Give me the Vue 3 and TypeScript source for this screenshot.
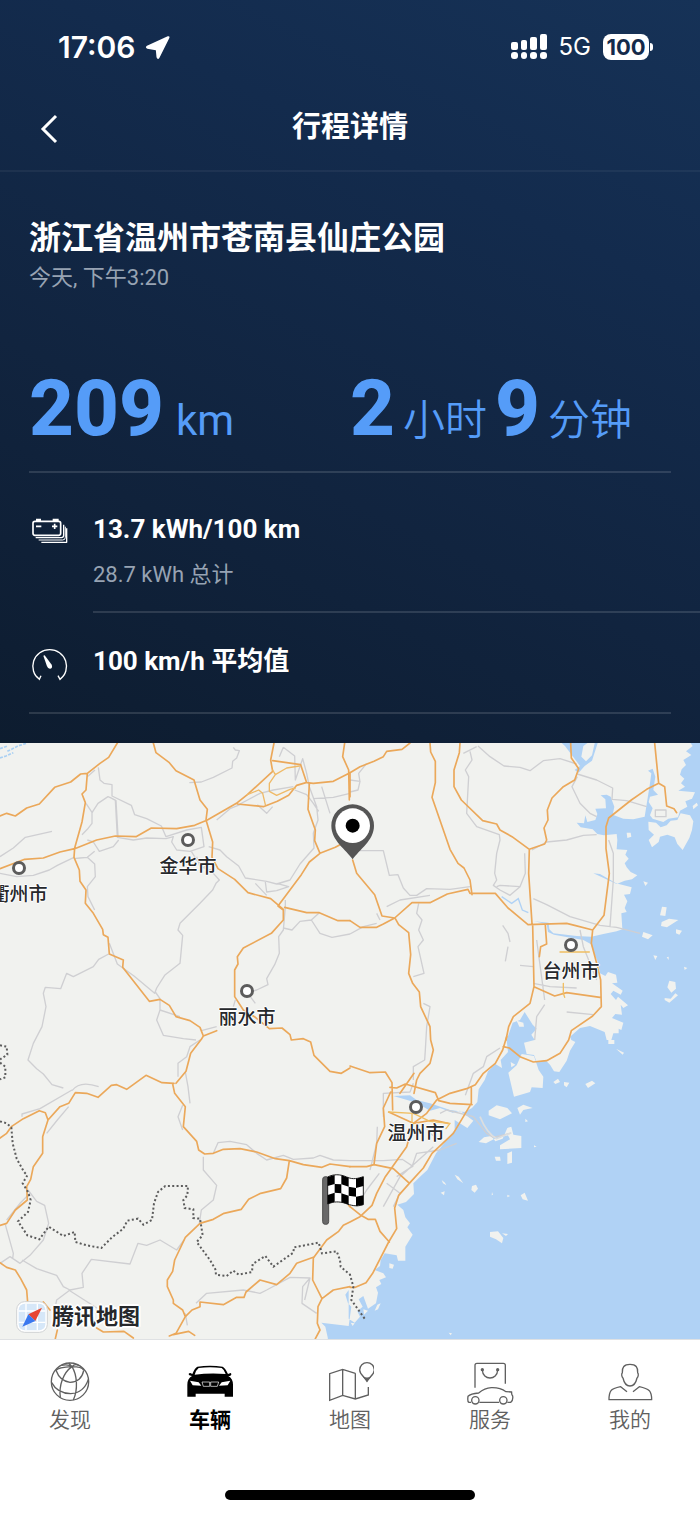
<script setup lang="ts">
interface City {
  name: string
  x: number
  y: number
}

interface Tab {
  id: string
  label: string
  active?: boolean
}

const MAP_WIDTH = 700
const MAP_HEIGHT = 596

const cities: City[] = [
  { name: '金华市', x: 188, y: 97 },
  { name: '衢州市', x: 19, y: 125 },
  { name: '丽水市', x: 247, y: 248 },
  { name: '台州市', x: 571, y: 202 },
  { name: '温州市', x: 416, y: 364 },
]

const tabs: Tab[] = [
  { id: 'discover', label: '发现' },
  { id: 'vehicle', label: '车辆', active: true },
  { id: 'map', label: '地图' },
  { id: 'service', label: '服务' },
  { id: 'profile', label: '我的' },
]

const place = (c: City) => ({
  left: (c.x / MAP_WIDTH) * 100 + '%',
  top: (c.y / MAP_HEIGHT) * 100 + '%',
})
</script>

<template>
  <div class="screen">
    <section class="trip">
      <div class="status">
        <div class="status-side">
          <span class="time">17:06</span>
          <svg class="arrow" viewBox="370 42 76 76" aria-hidden="true">
            <path d="M439 46 Q446 44 444 51 L414 111 Q409 119 405 110 L403 88 L377 84 Q369 80 376 75Z" fill="#fff" />
          </svg>
        </div>
        <div class="status-side">
          <svg class="signal" viewBox="0 0 36 26" aria-hidden="true">
            <g fill="#fff">
              <rect x="0" y="8" width="7" height="8" rx="2" />
              <rect x="10" y="6" width="6" height="10" rx="2" />
              <rect x="19" y="3" width="7" height="13" rx="2" />
              <rect x="29" y="0" width="7" height="16" rx="2" />
              <rect x="0" y="18" width="7" height="7" rx="3" />
              <rect x="10" y="18" width="6" height="7" rx="3" />
              <rect x="19" y="18" width="7" height="7" rx="3" />
              <rect x="29" y="18" width="7" height="7" rx="3" />
            </g>
          </svg>
          <span class="network">5G</span>
          <span class="battery">100</span>
        </div>
      </div>

      <header class="header">
        <button class="back" type="button" aria-label="返回">
          <svg viewBox="0 0 18 30" aria-hidden="true">
            <path d="M16 2 L3 15 L16 28" fill="none" stroke="#fff" stroke-width="3" />
          </svg>
        </button>
        <h1>行程详情</h1>
      </header>

      <div class="place">
        <h2>浙江省温州市苍南县仙庄公园</h2>
        <p>今天, 下午3:20</p>
      </div>

      <div class="figures">
        <p><strong>209</strong><span class="unit">km</span></p>
        <p><strong>2</strong><span class="unit cjk">小时</span><strong class="minutes">9</strong><span class="unit cjk">分钟</span></p>
      </div>

      <div class="row">
        <svg class="row-icon" viewBox="32 46 120 102" aria-hidden="true">
          <g fill="none" stroke="#fff" stroke-width="5" stroke-linejoin="round">
            <rect x="41" y="62" width="83" height="42" rx="6" />
            <path d="M49 111 H126 Q133 111 133 104 V72" stroke-width="4" />
            <path d="M58 118 H130 Q138 118 138 110 V78" stroke-width="3" />
            <path d="M66 125 H142 V83" stroke-width="4" />
            <path d="M50 77 H66 M98 77 H114 M106 69 V85" stroke-width="5" />
          </g>
          <path d="M50 61 V54 H65 V61Z M100 61 V54 H118 V61Z" fill="#fff" />
        </svg>
        <div class="row-text">
          <p class="main">13.7 kWh/100 km</p>
          <p class="sub">28.7 kWh 总计</p>
        </div>
      </div>

      <div class="row last">
        <svg class="row-icon" viewBox="32 441 120 102" aria-hidden="true">
          <path d="M53 527 L60 535 L65 524 M60 534 C42 523 37 499 43 480 C50 459 69 446 91 446 C113 446 132 459 139 480 C145 499 140 523 122 534 M116 524 L122 535 L130 527" fill="none" stroke="#fff" stroke-width="4" />
          <path d="M72 464 L76 463 L97 491 Q101 500 93 503 Q86 504 83 496Z" fill="#fff" />
        </svg>
        <div class="row-text">
          <p class="main">100 km/h 平均值</p>
        </div>
      </div>
    </section>

    <section class="map" aria-label="行程地图">
      <svg class="map-art" viewBox="0 9 2100 1788" aria-hidden="true">
        <rect x="0" y="0" width="2100" height="1800" fill="#f1f2ef" />

        <g transform="translate(1050 0)">
          <!-- sea -->
          <path fill="#b0d2f5" d="M1015 0 L1028 18 1008 34 1024 45 1000 60 1008 75 995 88 990 104 1003 116 993 130 1005 140 985 152 1035 157 1026 176 1006 184 1012 200 990 212 984 232 955 236 940 246 908 236 900 226 908 205 896 186 900 170 924 164 910 150 916 110 908 86 894 92 904 100 900 130 892 180 884 230 850 238 820 236 788 224 793 200 782 170 770 164 752 166 766 178 768 205 736 206 742 222 736 240 712 246 706 226 702 250 680 248 692 262 728 268 742 282 762 286 800 282 802 300 800 328 832 330 826 344 836 356 824 370 830 382 842 396 862 406 846 418 824 422 800 432 730 400 750 402 798 430 845 442 840 462 822 464 832 484 824 504 830 516 814 520 817 568 800 574 760 582 724 590 680 588 610 580 598 568 596 548 552 544 590 552 594 576 612 584 700 600 722 612 732 640 742 662 750 700 766 708 774 696 798 704 802 728 786 730 818 752 812 764 790 752 782 762 798 780 804 770 834 796 820 804 812 794 816 824 796 822 786 834 820 848 814 870 806 866 806 880 790 880 784 900 770 900 764 876 720 858 690 864 660 890 664 900 676 906 660 932 650 962 628 996 612 994 600 974 586 960 560 966 552 945 530 942 522 908 554 900 544 884 560 866 548 854 524 816 510 840 488 848 470 900 474 936 452 960 456 984 436 972 414 994 404 1020 386 1048 382 1086 366 1104 344 1116 300 1110 240 1090 200 1080 180 1066 130 1068 200 1088 240 1112 270 1104 308 1118 330 1112 370 1142 352 1164 314 1140 314 1170 290 1200 258 1240 232 1290 210 1310 190 1330 192 1362 168 1386 142 1394 160 1410 166 1432 180 1450 172 1462 188 1484 166 1520 166 1562 144 1562 140 1546 104 1540 92 1560 90 1578 74 1590 100 1600 108 1612 88 1620 94 1632 78 1642 84 1658 78 1690 54 1706 40 1668 26 1678 38 1700 22 1714 30 1730 14 1748 -4 1736 -4 1650 -14 1664 -6 1690 4 1700 -4 1758 -86 1748 -74 1760 -66 1796 -76 1800 1060 1800 1060 0Z" />
          <path fill="#b0d2f5" d="M625 0 L645 18 690 78 674 90 686 98 704 78 726 62 746 0 734 10 726 46 708 64 694 50 700 18 714 8Z" />
          <path fill="#f1f2ef" d="M895 245 L918 248 932 262 950 256 962 242 982 240 992 220 1020 226 1030 244 1026 270 1018 294 998 330 982 312 974 292 952 284 930 290 926 306 906 322 896 300 912 284 896 270Z M1028 198 l12 -10 4 8 -14 12Z M830 278 l12 0 2 12 -12 4Z M936 500 l14 2 -4 26 -16 -2Z M935 546 l22 -10 28 4 -34 22 -18 -4Z M880 576 l28 10 -14 12 -18 -8Z M978 568 l18 4 -8 12 -10 -4Z M958 722 l18 4 2 20 -14 12 -12 -16Z M944 774 l18 2 14 -16 8 6 -26 22 -14 -8Z M910 646 l12 2 -6 12Z M950 652 l6 -2 0 10Z M1002 680 l10 4 -8 6Z M880 424 l14 4 -8 10Z M500 842 L520 848 522 860 508 860Z" />
          <path fill="#f1f2ef" d="M475 998 L500 976 515 942 552 948 566 990 580 1010 578 1044 545 1042 540 1056 492 1070Z M482 966 l14 8 -12 8Z M416 1112 L440 1096 472 1104 486 1120 450 1138 416 1126Z M502 1104 l18 -10 28 10 -28 6 -10 14Z M402 1192 l22 -4 12 16 22 -8 14 -32 12 -4 6 24 24 4 0 36 -64 4 0 -12 30 -18 -6 -12 -40 10 -26 14 -22 -4Z M610 1026 l14 -10 6 10 -14 6Z M642 1026 l16 2 -8 14 -8 -6Z M706 1032 l20 -10 10 8 -22 14Z M434 1250 l16 0 2 12 -14 0Z M472 1240 l14 -6 0 34 -14 4Z M366 1338 l12 -4 6 12 -10 12 -10 -8Z M512 1366 l12 -8 10 24 -16 -4Z M314 1304 l12 6 14 20 -18 -12Z M272 1358 l12 -4 -2 12Z M275 1320 l10 8 4 8 -10 -6Z M472 1364 l8 4 -8 4Z M420 1476 L444 1474 460 1494 456 1510 438 1498 420 1490Z M456 1480 l18 2 -6 6Z M775 900 l18 0 0 12 -18 0Z M798 926 l24 12 -4 6Z M118 1570 l14 4 -4 12 -10 -2Z M74 1712 l8 -18 10 -4 -8 18Z M2 1748 l12 2 -6 8Z M296 1778 l10 2 -4 6Z M40 1708 l14 4 -12 12Z M526 1136 l8 8 -8 2Z M552 1216 l8 4 -8 2Z M426 1356 l3 8 -4 2Z" />
          <path d="M455 470 l30 20 20 -14 12 34 18 8" fill="none" stroke="#b0d2f5" stroke-width="4" />
        </g>
        <path d="M0 54 L18 48 40 38 M0 26 l22 -8 M22 34 l32 -16 24 -8" fill="none" stroke="#a9d0f3" stroke-width="5" stroke-dasharray="9 4" />

        <!-- secondary roads -->
        <g fill="none" stroke="#cfcfd2" stroke-width="4" stroke-linejoin="round">
          <path d="M295 82 L300 120 312 130 336 134 336 168 394 196 404 224 440 236 484 258 498 290 560 270 604 262 612 320 570 334 530 330 515 306 520 290 498 296 440 294 400 300 352 292 346 180 324 170 294 190 276 218 276 250 262 268 246 284 M258 190 L278 220 M330 172 L348 182 354 288 M262 300 L280 306 298 334 340 320 356 300 M285 90 L262 110 M156 274 L76 292 40 324 0 350 M222 352 L172 376 148 390 100 406 50 410 0 400 M262 352 L284 372 286 410 262 440 264 470 284 510 M262 352 L240 354 222 356 M284 334 L262 352 M700 22 L706 30 718 32 710 54 698 64 696 84 640 112 604 126 568 128 M850 22 L838 50 M850 22 L884 48 886 120 908 56 920 100 928 140 950 200 954 240 940 280 942 324 900 372 870 420 830 432 800 424 736 414 716 378 680 350 660 330 626 320 M884 150 L920 164 940 190 956 214 M720 192 L780 160 820 150 880 140 M720 194 L690 206 650 240 M940 176 L1000 172 1050 160 M965 140 L990 220 M772 194 L800 220 818 200 M766 430 L800 466 M830 452 L866 440 830 430 M796 426 L800 456 830 452 M574 334 L590 360 640 400 658 420 648 430 638 450 600 490 570 520 540 550 534 570 548 586 540 670 494 706 470 744 464 760 402 708 352 672 328 610 M326 642 L296 658 280 680 220 710 200 700 182 746 136 742 130 760 138 800 126 860 100 910 84 960 110 986 130 1002 156 1034 190 1044 M466 756 L480 776 480 810 470 840 490 886 550 896 588 900 M480 810 L540 830 M856 480 L856 500 850 570 836 590 838 640 824 674 800 716 804 734 770 750 742 758 766 790 M850 564 L876 570 900 544 934 540 960 580 996 592 1050 582 M934 540 L958 518 M604 872 L650 860 M706 780 L700 800 M590 350 L600 380 640 392" />
          <path d="M216 1052 Q240 1020 296 1040 M216 1050 L120 1106 66 1122 66 1130 M206 1100 L172 1140 140 1180 M534 1010 L534 970 560 950 570 920 600 900 M556 996 L564 1040 570 1090 M548 1096 L534 1130 548 1170 M640 1240 L654 1208 690 1204 740 1214 770 1240 800 1260 850 1246 880 1258 940 1254 960 1246 1000 1260 1050 1262 M610 1250 L610 1290 650 1336 640 1380 604 1410 598 1450 M84 1350 L110 1384 134 1396 146 1450 130 1500 90 1546 60 1570 30 1550 0 1570 M90 1360 L60 1390 20 1440 M16 1454 L40 1540 38 1556 M66 1560 L110 1586 170 1606 190 1640 210 1650 250 1642 246 1600 274 1558 390 1572 414 1510 440 1516 480 1500 530 1530 552 1500 M210 1650 L170 1680 166 1700 M206 1650 L300 1710 M588 1690 L620 1660 730 1650 780 1660 800 1650 870 1612 930 1614 908 1640 906 1690 950 1720 M930 1614 L914 1680 M556 1720 L562 1756" />
          <path d="M1050 120 L1080 124 1074 150 1050 156 M1100 70 L1076 100 1080 126 M1434 18 L1470 50 1512 78 1560 82 1590 92 1630 62 1680 56 1730 72 M1410 34 L1416 60 1396 90 1406 110 1400 220 1430 260 1498 284 1500 300 1490 340 1484 400 1490 420 1480 436 1500 450 1530 466 1560 440 1500 436 1490 440 M1574 340 L1576 400 1560 440 M1430 20 L1390 40 M1732 110 L1716 140 1740 190 1770 220 1790 230 M1732 102 L1790 120 1838 144 1836 178 1880 182 1940 200 M1596 330 L1640 306 1700 300 1750 286 1790 284 M1600 476 L1640 494 1710 530 1800 556 1850 562 1920 580 M1826 300 L1840 340 1840 420 1830 560 M1064 332 L1150 332 1168 406 1194 404 1210 444 1230 466 1250 466 1280 446 1350 448 1410 440 M1160 500 L1200 480 1290 466 M1256 490 L1250 520 1266 540 1256 570 1270 600 1254 620 1272 700 1240 710 M1508 556 L1524 580 1530 606 M1524 620 L1516 664 M1610 600 L1634 780 M1560 676 L1600 680 M1600 730 L1650 740 1730 744 M1700 816 L1780 824 M1634 794 L1610 830 1604 900 M1270 790 L1290 800 1280 860 1276 930 1274 960 1240 980 1240 1020 M1740 570 L1750 620 1790 720 M1050 582 L1090 560 1130 550 M1130 520 L1140 540" />
          <path d="M1050 1262 L1150 1262 1210 1258 M1150 1130 L1150 1060 1230 1056 1240 1030 M1500 924 L1460 950 1450 980 1420 1000 1396 1066 M1320 1120 L1340 1110 1420 1130 1460 1180 1480 1192 1530 1180 M1370 1210 L1320 1230 1250 1240 1236 1280 1190 1310 M1300 1220 L1200 1310 1150 1400 M1290 1180 L1320 1200 M1138 1300 L1100 1350 1070 1400 M1160 1330 L1200 1360 1180 1400 M1240 1280 L1210 1260 M1132 1160 L1130 1210 1110 1290" />
          <path d="M1966 210 h32 v20 h-32Z" />
        </g>
        <path d="M1440 1130 Q1460 1180 1490 1196 L1534 1178" fill="none" stroke="#dcdedf" stroke-width="5" />

        <!-- highways -->
        <g fill="none" stroke="#eba85a" stroke-width="5" stroke-linejoin="round" stroke-linecap="round">
          <path d="M352 9 L326 52 300 70 262 100 242 102 212 126 164 142 118 192 80 204 46 228 20 220 0 228 M262 100 L258 150 246 162 256 188 246 246 224 324 222 352 238 390 240 424 258 450 256 490 280 520 308 568 310 584 324 592 328 642 370 660 368 682 448 784 480 778 508 796 528 830 570 842 600 862 610 888 650 872 M610 888 L604 898 572 940 558 994 528 1030 M0 386 L74 358 130 354 180 336 224 326 290 300 346 288 408 290 454 264 530 266 584 256 622 240 712 188 M460 9 L468 38 508 68 528 92 582 120 600 180 622 208 618 240 638 306 636 352 654 386 704 418 744 458 812 476 850 508 M822 9 L812 60 818 94 742 164 712 188 M818 62 L902 74 920 128 940 130 1000 124 1050 98 M712 192 L790 200 832 184 866 166 890 136 918 128 M928 132 L924 208 946 270 944 302 960 340 M1034 9 L1028 50 1046 90 1048 180 M1046 300 L1006 322 960 340 928 366 904 404 834 498 M834 498 L850 510 850 540 814 580 730 624 712 650 714 672 704 690 704 770 730 810 766 832 808 866 846 864 870 884 874 900 910 896 932 906 942 946 966 970 990 994 1024 1000 1050 984 M854 502 L920 518 958 518 1014 542 1050 542" />
          <path stroke-width="4" stroke="#efba68" d="M818 90 L826 104 860 84 898 78 M826 104 L808 130 808 154 830 166 870 148 886 144 M742 164 L776 150 788 160 796 194" />
          <path d="M1050 98 L1080 80 1122 64 1150 50 1160 34 1206 28 1230 9 M1050 98 L1050 170 M1290 9 L1292 36 1306 64 1306 128 1296 172 1350 328 1374 370 1392 384 1410 420 1416 464 M1380 9 L1378 38 1362 90 1362 140 1384 180 1448 242 1490 252 1500 270 1536 290 1588 328 1634 312 1640 300 1632 264 1644 240 1642 210 1656 174 1690 140 1724 120 1736 86 1714 54 1712 9 M1588 328 L1586 400 1596 550 M1964 9 L1976 130 1994 140 2000 198 2022 206 2030 218 M1976 130 L1940 148 1894 180 1826 234 1818 260 1818 326 1828 400 1812 526 1778 570 1724 556 1700 550 1584 554 1524 504 1486 460 1410 460 1404 448 1342 462 1290 488 1236 488 1184 534 1146 528 1124 464 1070 400 1058 360 M1184 534 L1150 552 1130 562 1080 562 1050 542 M1186 536 L1196 554 1226 578 1232 644 1226 700 1238 730 1258 756 1262 800 1290 860 1292 900 1300 930 1290 970 1260 1000 1250 1020 1242 1060 M1598 554 L1602 740 1590 790 1540 830 1526 860 1518 900 M1636 556 L1640 612 1622 620 1618 650 M1778 570 L1774 610 1790 670 1802 720 1804 800 1778 828 1714 872 1706 900 1680 940 1640 962 1600 966 1560 950 1528 924 1510 920 M1602 740 L1664 768 1700 758 1800 772" />
          <path d="M1520 890 L1508 930 1486 970 1450 1000 1426 1034 1400 1046 1350 1060 1310 1080 1280 1120 1240 1150 1220 1220 1156 1310 1130 1360 1116 1396 1080 1430 1050 1446 M1050 978 L1110 998 1156 996 1176 1028 1178 1110 M1170 1042 L1190 1044 1216 1032 1306 1058 1316 1082 1350 1090 1416 1094 M1414 1042 L1414 1090 1360 1180 1296 1240 1270 1284 1230 1328 1196 1366 1184 1404 1190 1466 1166 1506 1118 1600 1098 1628 1066 1642 1050 1642 M1172 1056 L1150 1104 1154 1160 1130 1210 1122 1274 M1050 1280 L1100 1280 1122 1274 1180 1286 1226 1328 M1050 1400 L1080 1424 1104 1438 1126 1438 1140 1474 1168 1506 M1050 1446 L1030 1456 1016 1474 980 1500 940 1554 938 1620 966 1676 954 1700 952 1750 960 1770 946 1796 M966 1676 L1000 1650 1050 1640 M1166 1116 L1240 1150 1300 1140 1344 1150 M1242 1000 L1200 1060" />
          <path stroke-width="4" stroke="#f0be62" d="M1680 636 h88 M1690 730 l0 30 4 12 M1166 1116 L1240 1120 1290 1144 1350 1150 M1236 1120 l0 60 M1350 1150 l-12 16" />
          <path d="M0 1194 L20 1180 34 1160 70 1136 118 1112 136 1118 144 1140 180 1100 206 1090 226 1058 260 1060 294 1072 334 1036 350 1034 380 1048 438 1006 486 1028 522 1030 M518 1032 L524 1060 556 1100 550 1160 590 1204 596 1230 614 1242 640 1240 670 1228 720 1226 770 1236 826 1256 868 1262 910 1274 966 1282 990 1272 1050 1280 M868 1262 L860 1314 842 1346 782 1360 746 1378 724 1408 672 1420 640 1438 600 1450 556 1492 524 1560 518 1594 502 1620 502 1640 520 1680 520 1690 548 1710 556 1730 528 1780 508 1788 M144 1140 L128 1190 128 1240 100 1280 92 1318 80 1340 82 1380 46 1410 20 1450 0 1456 M0 1568 L20 1582 46 1590 62 1616 80 1650 84 1700 M130 1686 L150 1710 M290 1764 L310 1776 372 1774 400 1794 M172 1770 L166 1796 M520 1784 L566 1774 584 1786 M556 1730 L576 1710 600 1700 600 1686 670 1694 710 1672 732 1672 738 1656 780 1620 830 1634 870 1600 890 1570 940 1552 M1046 1396 L1050 1400" />
        </g>

        <!-- provincial border -->
        <g fill="none" stroke="#5c5c5c" stroke-width="6" stroke-dasharray="6 7">
          <path d="M0 916 L20 920 22 944 0 958 M0 968 L16 980 16 1012 0 1018" />
          <path d="M0 1144 L20 1150 34 1162 38 1210 50 1256 72 1296 82 1306 68 1330 84 1356 92 1380 84 1416 54 1444 82 1486 118 1498 146 1460 190 1488 224 1476 226 1506 260 1516 304 1524 336 1492 370 1466 382 1442 414 1436 430 1454 456 1440 462 1390 474 1356 496 1338 564 1338 562 1366 550 1380 554 1404 580 1408 580 1434 600 1436 608 1486 590 1506 630 1560 646 1588 648 1604 680 1608 700 1592 716 1604 756 1596 758 1572 796 1548 820 1580 880 1538 882 1522 956 1508 966 1540 1010 1534 1020 1560 1022 1580 1050 1604 1060 1640 1054 1680 1064 1694 1094 1736" />
        </g>

        <!-- trip start -->
        <path d="M1058 358 C1038 328 994 302 994 257 A64 64 0 1 1 1122 257 C1122 302 1078 328 1058 358Z" fill="#555" />
        <circle cx="1058" cy="257" r="52" fill="#fff" />
        <circle cx="1058" cy="257" r="21" fill="#000" />

        <!-- trip end -->
        <rect x="968" y="1310" width="18" height="143" rx="8" fill="#696969" stroke="#4f4f4f" stroke-width="3" />
        <path d="M983 1311 C1000 1302 1020 1302 1040 1311 C1060 1320 1074 1315 1090 1310 V1394 C1070 1401 1052 1396 1036 1390 C1018 1384 1002 1384 983 1392Z" fill="#fff" stroke="#222" stroke-width="3" />
        <path fill="#000" d="M983 1311 L1004 1305 V1332 L983 1338Z M1024 1306 L1046 1313 V1340 L1024 1333Z M1068 1316 L1090 1310 V1338 L1068 1344Z M1004 1332 L1024 1333 V1360 L1004 1358Z M1046 1340 L1068 1344 V1370 L1046 1367Z M983 1365 L1004 1358 V1385 L983 1392Z M1024 1360 L1046 1367 V1394 L1024 1386Z M1068 1370 L1090 1366 V1394 L1068 1398Z" />
      </svg>

      <div v-for="city in cities" :key="city.name" class="city" :style="place(city)">
        <span class="dot"></span>
        <span class="city-name">{{ city.name }}</span>
      </div>

      <div class="provider">
        <svg viewBox="0 0 96 96" aria-hidden="true">
          <rect x="2" y="2" width="92" height="92" rx="24" fill="#fff" stroke="#d0d2d4" stroke-width="3" />
          <rect x="8" y="8" width="80" height="80" rx="18" fill="#d6e7f8" />
          <path d="M30 8 V88 M64 8 V88 M8 30 H88 M8 64 H88" stroke="#fff" stroke-width="4" />
          <path d="M37 40 L78 20 58 60Z" fill="#e74532" />
          <path d="M37 40 L19 77 58 60Z" fill="#3a78ef" />
        </svg>
        <span>腾讯地图</span>
      </div>
    </section>

    <nav class="tabs">
      <a v-for="tab in tabs" :key="tab.id" :href="'#' + tab.id" class="tab" :class="{ active: tab.active }">
        <svg v-if="tab.id === 'discover'" viewBox="138 60 144 144" aria-hidden="true">
          <g fill="none" stroke="#606060" stroke-width="4">
            <circle cx="210" cy="125" r="56" />
            <path d="M216 80 C190 98 176 136 181 173 M216 80 C232 106 234 150 220 180 M168 91 Q174 82 216 80 Q246 80 251 91 M168 91 Q180 124 210 127 Q244 126 251 92 M155 128 Q172 160 212 161 Q252 158 265 118 M184 76 Q206 72 216 80 Q224 70 236 76 M206 69 L216 80" />
          </g>
        </svg>
        <svg v-else-if="tab.id === 'vehicle'" viewBox="558 60 144 144" aria-hidden="true">
          <path d="M592 80 Q630 75 668 80 Q676 84 684 102 L692 99 Q697 103 690 108 L685 108 Q699 116 699 134 V170 H674 V161 H587 V170 H562 V134 Q562 116 576 108 L568 106 Q563 100 571 99 L577 102 Q584 84 592 80Z" fill="#000" />
          <path d="M596 84 Q630 79 665 84 Q672 88 677 102 Q630 98 584 104 Q588 90 596 84Z M570 122 L596 127 604 137 578 136Z M691 122 L665 127 657 137 683 136Z" fill="#fff" />
          <path d="M606 126 H629 V139 H610Z M632 126 H656 L652 139 H632Z" fill="#000" stroke="#fff" stroke-width="2" />
        </svg>
        <svg v-else-if="tab.id === 'map'" viewBox="978 60 144 144" aria-hidden="true">
          <path d="M1066 100 L1028 88 989 101 V181 L1028 166 1066 177 1105 165 V141 M1028 88 V166 M1066 100 V177" fill="none" stroke="#606060" stroke-width="4" />
          <path d="M1101 122 C1096 110 1080 108 1079 90 A22 22 0 1 1 1123 90 C1122 108 1106 110 1101 122Z" fill="none" stroke="#606060" stroke-width="4" />
          <path d="M1087 109 Q1101 116 1115 109 L1101 127Z" fill="#606060" />
        </svg>
        <svg v-else-if="tab.id === 'service'" viewBox="348 60 144 144" aria-hidden="true">
          <g fill="none" stroke="#606060" stroke-width="4" stroke-linejoin="round">
            <path d="M375 143 V76 Q375 70 381 70 H460 Q466 70 466 76 V131 M397 90 C398 122 442 122 443 90" />
            <path d="M363 187 H356 Q352 184 354 169 Q362 161 386 159 Q404 144 424 143 Q450 142 468 155 L485 156 Q484 163 488 168 Q490 182 482 187 H472 M388 187 H447" />
            <circle cx="376" cy="181" r="11" />
            <circle cx="460" cy="181" r="11" />
          </g>
          <circle cx="397" cy="89" r="5" fill="#606060" />
          <circle cx="443" cy="89" r="5" fill="#606060" />
        </svg>
        <svg v-else viewBox="768 60 144 144" aria-hidden="true">
          <path d="M840 73 C822 73 816 82 817 98 C813 102 816 112 819 114 C822 128 830 138 840 138 C850 138 858 128 861 114 C864 112 867 102 863 98 C864 82 858 73 840 73Z M831 155 L812 140 Q788 145 783 152 Q777 160 777 179 H905 Q905 160 898 152 Q890 145 868 140 L849 155" fill="none" stroke="#606060" stroke-width="4" stroke-linejoin="round" />
        </svg>
        <span>{{ tab.label }}</span>
      </a>
    </nav>
    <div class="home"><span></span></div>
  </div>
</template>

<style>
body {
  background: #fff;
}
</style>

<style scoped>
.screen {
  font-family: Roboto, "Noto Sans CJK SC", sans-serif;
  color: #fff;
  min-height: 100vh;
  overflow: hidden;
}

h1,
h2,
p {
  margin: 0;
}

.trip {
  background: linear-gradient(205deg, #163257 0%, #132b4d 28%, #11243f 62%, #0d1c2f 100%);
  padding-bottom: 29px;
}

.status {
  display: flex;
  justify-content: space-between;
  align-items: center;
  height: 60px;
  padding: 17px 51px 7px 58px;
  font-family: Inter, sans-serif;
}

.status-side {
  display: flex;
  align-items: center;
  gap: 9px;
}

.time {
  font-size: 30px;
  font-weight: 600;
  line-height: 36px;
}

.arrow {
  width: 25px;
  height: 25px;
}

.signal {
  width: 36px;
  height: 26px;
}

.network {
  font-size: 24px;
  line-height: 30px;
  margin: 0 3px;
}

.battery {
  position: relative;
  width: 46px;
  height: 26px;
  border-radius: 8px;
  background: #fff;
  color: #142a4a;
  font-size: 22px;
  font-weight: 700;
  line-height: 26px;
  text-align: center;
}

.battery::after {
  content: "";
  position: absolute;
  right: -4px;
  top: 9px;
  width: 3px;
  height: 8px;
  border-radius: 0 3px 3px 0;
  background: #fff;
}

.header {
  display: grid;
  grid-template-columns: 64px 1fr 64px;
  align-items: center;
  height: 86px;
  border-bottom: 2px solid rgba(255, 255, 255, 0.05);
}

.back {
  border: 0;
  padding: 4px 6px 0 0;
  background: none;
  line-height: 0;
  text-align: right;
}

.back svg {
  width: 18px;
  height: 30px;
}

h1 {
  font-size: 29px;
  font-weight: 700;
  line-height: 40px;
  text-align: center;
}

.place {
  padding: 42px 29px 0;
}

h2 {
  font-size: 32px;
  font-weight: 700;
  line-height: 48px;
}

.place p {
  color: #97a3b3;
  font-size: 22px;
  line-height: 32px;
}

.figures {
  display: grid;
  grid-template-columns: 1fr 1fr;
  margin: 0 29px;
  padding: 64px 0 12px;
  border-bottom: 2px solid rgba(255, 255, 255, 0.13);
  color: #559cf8;
}

.figures p {
  display: flex;
  align-items: baseline;
  height: 101px;
  line-height: 102px;
  white-space: nowrap;
}

.figures strong {
  font-size: 78px;
  font-weight: 800;
}

.unit {
  margin-left: 12px;
  font-size: 42px;
  font-weight: 400;
}

.cjk {
  margin-left: 8px;
  font-weight: 350;
}

.minutes {
  margin-left: 8px;
}

.row {
  display: flex;
  align-items: flex-start;
  gap: 24px;
  padding: 40px 0 0 30px;
}

.row-icon {
  flex: none;
  width: 40px;
  height: 34px;
  margin-top: 3px;
}

.row-text {
  flex: 1;
  border-bottom: 2px solid rgba(255, 255, 255, 0.13);
  margin-left: -1px;
  padding-bottom: 20px;
}

.main {
  font-size: 26px;
  font-weight: 700;
  line-height: 32px;
}

.sub {
  margin-top: 14px;
  color: #97a3b3;
  font-size: 22px;
  line-height: 32px;
}

.last {
  margin: 0 29px;
  padding: 32px 0 30px 1px;
  border-bottom: 2px solid rgba(255, 255, 255, 0.13);
}

.last .row-text {
  border: 0;
  padding: 0;
}

.map {
  position: relative;
  aspect-ratio: 700 / 596;
  overflow: hidden;
  color: #26282b;
}

.map-art {
  display: block;
  width: 100%;
  height: 100%;
}

.city {
  position: absolute;
  display: flex;
  flex-direction: column;
  align-items: center;
  width: 80px;
  margin: -7px 0 0 -40px;
}

.dot {
  box-sizing: border-box;
  width: 14px;
  height: 14px;
  border: 3px solid #5c5c5c;
  border-radius: 50%;
  background: #fff;
}

.city-name {
  margin-top: 6px;
  font-size: 19px;
  font-weight: 500;
  line-height: 28px;
  text-shadow: 1px 0 #fff, -1px 0 #fff, 0 1px #fff, 0 -1px #fff;
}

.provider {
  position: absolute;
  left: 16px;
  bottom: 6px;
  display: flex;
  align-items: center;
  gap: 4px;
  font-size: 22px;
  font-weight: 700;
  line-height: 32px;
  text-shadow: 2px 0 #fff, -2px 0 #fff, 0 2px #fff, 0 -2px #fff;
}

.provider svg {
  width: 32px;
  height: 32px;
}

.tabs {
  display: grid;
  grid-template-columns: repeat(5, 1fr);
  padding: 20px 0 40px;
  border-top: 1px solid #dfe1e3;
  background: #fff;
}

.tab {
  display: flex;
  flex-direction: column;
  align-items: center;
  color: #606060;
  font-size: 21px;
  font-weight: 350;
  line-height: 24px;
  text-decoration: none;
}

.tab svg {
  width: 48px;
  height: 48px;
}

.active {
  color: #000;
  font-weight: 700;
}

.home {
  display: flex;
  justify-content: center;
  padding: 18px 0 13px;
}

.home span {
  width: 250px;
  height: 10px;
  border-radius: 5px;
  background: #000;
}
</style>
